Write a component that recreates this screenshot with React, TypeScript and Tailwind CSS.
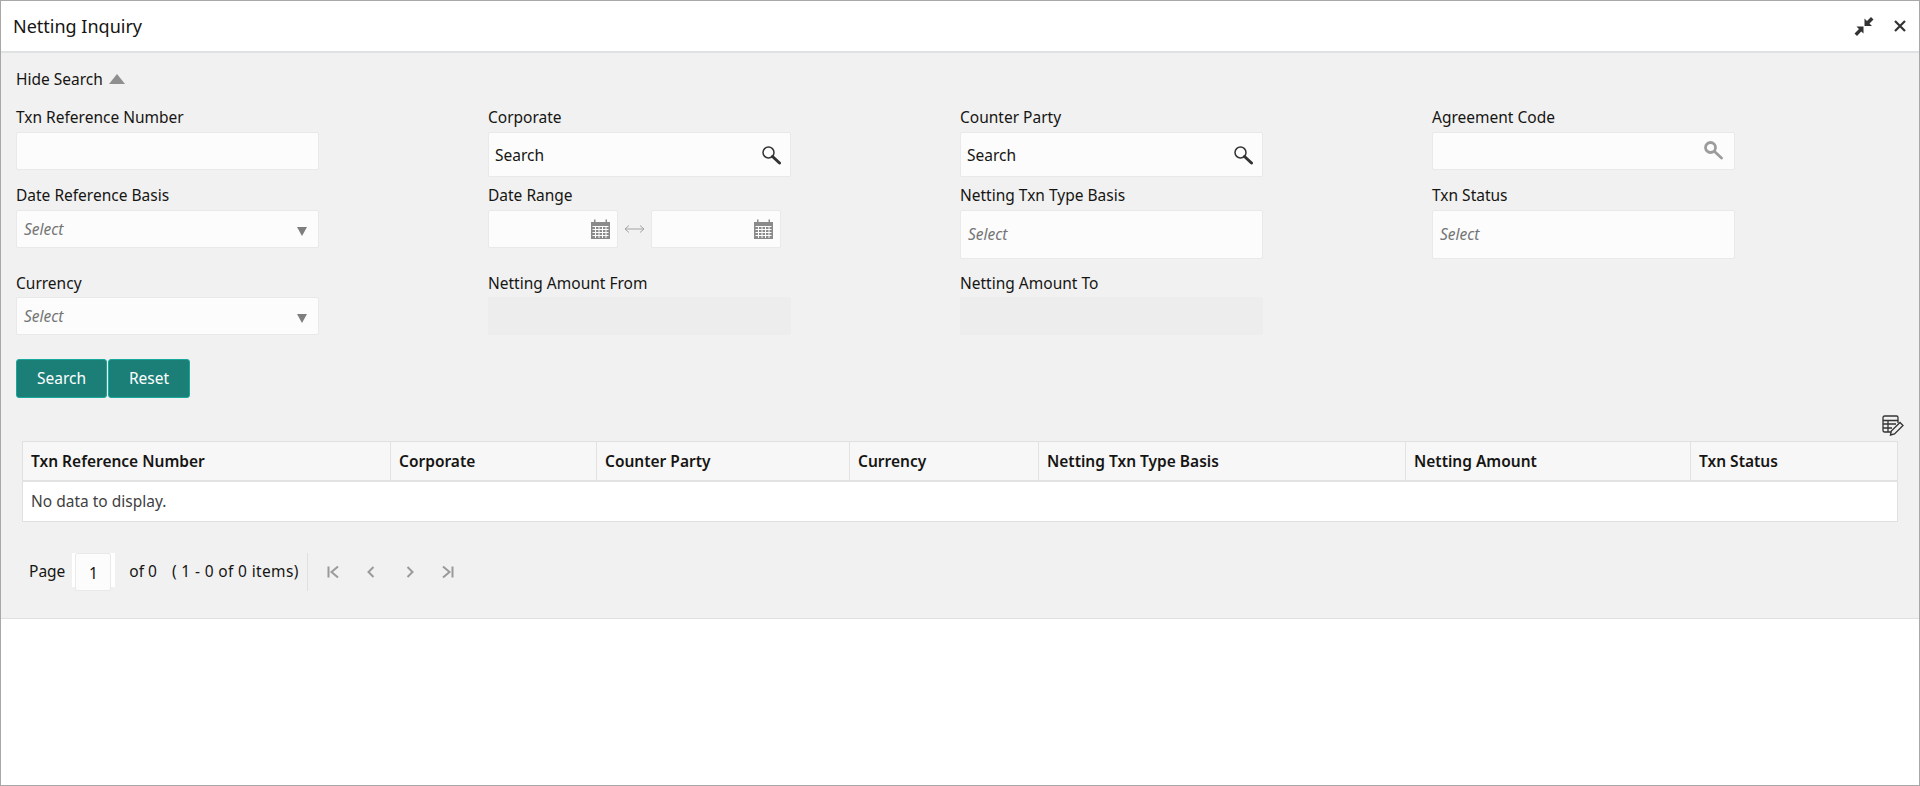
import type { ReactNode } from "react";

const FONT = "font-['Noto_Sans','Open_Sans',sans-serif]";

function SearchGlyph({ light }: { light?: boolean }) {
  const color = light ? "#9c9c9c" : "#333333";
  return (
    <svg width="20" height="20" viewBox="0 0 20 20" fill="none" aria-hidden="true">
      <circle cx="7.5" cy="7.5" r={light ? 5 : 5.5} stroke={color} strokeWidth={light ? 2.8 : 1.5} />
      <path d="M11.5 11.5L18.5 18" stroke={color} strokeWidth={light ? 2.8 : 3} strokeLinecap="round" />
    </svg>
  );
}

function CalendarGlyph() {
  return (
    <svg width="19" height="20" viewBox="0 0 19 20" aria-hidden="true">
      <path d="M0 3h3V0.5h1.5V3h10V0.5H16V3h3v17H0z" fill="#8a8a8a" />
      <path
        d="M1.5 7.5h16M1.5 10.5h16M1.5 13.5h16M1.5 16.5h16M4.5 7v12M8 7v12M11.5 7v12M15 7v12"
        stroke="#fcfcfc"
        strokeWidth="1"
      />
    </svg>
  );
}

function CollapseGlyph() {
  return (
    <svg width="20" height="20" viewBox="0 0 20 20" aria-hidden="true">
      <path d="M17 1L19.5 3.5L15.5 7.5L18 10H10.5V2.5L13 5z" fill="#333333" />
      <path d="M3 20L0.5 17.5L5 13L2.5 10.5H9.5V17.5L7.2 15.5z" fill="#333333" />
    </svg>
  );
}

function CloseGlyph() {
  return (
    <svg width="12" height="12" viewBox="0 0 12 12" aria-hidden="true">
      <path d="M1 1L11 11M11 1L1 11" stroke="#333333" strokeWidth="2.2" />
    </svg>
  );
}

function TableEditGlyph() {
  return (
    <svg width="22" height="21" viewBox="0 0 22 21" fill="none" aria-hidden="true">
      <path
        d="M10 17H2.5A1.5 1.5 0 0 1 1 15.5V2.5A1.5 1.5 0 0 1 2.5 1h12A1.5 1.5 0 0 1 16 2.5V8"
        stroke="#333333"
        strokeWidth="1.3"
      />
      <path d="M1 5.5h15M1 9h13M1 13h9M6 5.5V17" stroke="#333333" strokeWidth="1.3" />
      <path d="M8.5 20l.8-4L18 7.5l3 3L12.5 19z" fill="#f1f1f1" stroke="#333333" strokeWidth="1.3" />
    </svg>
  );
}

function PagerGlyph({ kind }: { kind: "first" | "prev" | "next" | "last" }) {
  const paths = {
    first: "M2.5 2.5V13.5M12 2.5L5.5 8L12 13.5",
    prev: "M9.5 3L4.5 8L9.5 13",
    next: "M5.5 3L10.5 8L5.5 13",
    last: "M12.5 2.5V13.5M3 2.5L9.5 8L3 13.5"
  };
  return (
    <svg width="15" height="16" viewBox="0 0 15 16" fill="none" aria-hidden="true">
      <path d={paths[kind]} stroke="#9a9a9a" strokeWidth="2" />
    </svg>
  );
}

function Field({
  label,
  labelH = "h-[27px]",
  children
}: {
  label: string;
  labelH?: string;
  children?: ReactNode;
}) {
  return (
    <div>
      <div className={`${labelH} text-[15.5px] leading-[24px] text-[#161513]`}>{label}</div>
      {children}
    </div>
  );
}

const box = "w-[303px] rounded-[2px] border border-[#e9e9e9] bg-[#fcfcfc]";

function SelectBox() {
  return (
    <div className={`${box} flex h-[38px] items-center justify-between pl-[7px] pr-[11px]`}>
      <span className="mt-[1px] text-[15.5px] italic text-[#757575]">Select</span>
      <span className="mt-[5px] h-0 w-0 border-x-[5.5px] border-t-[9px] border-x-transparent border-t-[#7e7e7e]" />
    </div>
  );
}

function MultiSelect() {
  return (
    <div className={`${box} flex h-[49px] items-center pl-[7px]`}>
      <span className="text-[15.5px] italic text-[#757575]">Select</span>
    </div>
  );
}

function LookupBox() {
  return (
    <div className={`${box} flex h-[45px] items-center justify-between pl-[6px] pr-[9px]`}>
      <span className="mt-[3px] text-[15.5px] text-[#161513]">Search</span>
      <SearchGlyph />
    </div>
  );
}

function DateBox() {
  return (
    <div className="flex h-[38px] w-[130px] items-center justify-end rounded-[2px] border border-[#e9e9e9] bg-[#fcfcfc] pr-[7px]">
      <CalendarGlyph />
    </div>
  );
}

const columns = [
  { title: "Txn Reference Number", width: "w-[368px]" },
  { title: "Corporate", width: "w-[206px]" },
  { title: "Counter Party", width: "w-[253px]" },
  { title: "Currency", width: "w-[189px]" },
  { title: "Netting Txn Type Basis", width: "w-[367px]" },
  { title: "Netting Amount", width: "w-[285px]" },
  { title: "Txn Status", width: "flex-1" }
];

// Netting Inquiry search window with an empty results table.
export default function App() {
  return (
    <div className={`${FONT} flex h-[786px] w-full flex-col overflow-hidden border border-[#a8a8a8] bg-white`}>
      <header className="flex h-[52px] shrink-0 items-center justify-between border-b-2 border-[#dfe2e2] pl-[12px] pr-[13px]">
        <h1 className="text-[18px] font-normal text-[#161513]">Netting Inquiry</h1>
        <div className="flex items-center gap-[20px]">
          <CollapseGlyph />
          <CloseGlyph />
        </div>
      </header>

      <main className="h-[566px] shrink-0 border-b border-[#e0e0e0] bg-[#f1f1f1]">
        <div className="flex h-[52px] items-start gap-[6px] pl-[15px] pt-[14px] text-[15.5px] leading-[24px] text-[#161513]">
          <span>Hide Search</span>
          <span className="mt-[7px] h-0 w-0 border-x-[8px] border-b-[10px] border-x-transparent border-b-[#8f8f8f]" />
        </div>

        <div className="grid grid-cols-[472px_472px_472px_1fr] grid-rows-[78px_88px_88px] pl-[15px]">
          <Field label="Txn Reference Number">
            <div className={`${box} h-[38px]`} />
          </Field>
          <Field label="Corporate">
            <LookupBox />
          </Field>
          <Field label="Counter Party">
            <LookupBox />
          </Field>
          <Field label="Agreement Code">
            <div className={`${box} flex h-[38px] items-start justify-end pr-[11px] pt-[7px]`}>
              <SearchGlyph light />
            </div>
          </Field>

          <Field label="Date Reference Basis">
            <SelectBox />
          </Field>
          <Field label="Date Range">
            <div className="flex items-center">
              <DateBox />
              <svg className="mx-[6px]" width="21" height="10" viewBox="0 0 21 10" fill="none" aria-hidden="true">
                <path d="M1 5h19M5 1.5L1 5l4 3.5M16 1.5L20 5l-4 3.5" stroke="#a3a3a3" strokeWidth="1" />
              </svg>
              <DateBox />
            </div>
          </Field>
          <Field label="Netting Txn Type Basis">
            <MultiSelect />
          </Field>
          <Field label="Txn Status">
            <MultiSelect />
          </Field>

          <Field label="Currency" labelH="h-[26px]">
            <SelectBox />
          </Field>
          <Field label="Netting Amount From" labelH="h-[26px]">
            <div className="h-[38px] w-[303px] rounded-[2px] bg-[#ededed]" />
          </Field>
          <Field label="Netting Amount To" labelH="h-[26px]">
            <div className="h-[38px] w-[303px] rounded-[2px] bg-[#ededed]" />
          </Field>
        </div>

        <div className="flex gap-[1px] pl-[15px]">
          <button className="h-[39px] w-[91px] rounded-[3px] border border-[#19a89c] bg-[#1b7f78] pt-[1px] text-[15.5px] text-white">
            Search
          </button>
          <button className="h-[39px] w-[82px] rounded-[3px] border border-[#19a89c] bg-[#1b7f78] pt-[1px] text-[15.5px] text-white">
            Reset
          </button>
        </div>

        <div className="mt-[16px] flex h-[27px] items-start justify-end pr-[15px] pt-[1px]">
          <TableEditGlyph />
        </div>

        <div className="ml-[21px] mr-[21px] border border-[#e0e0e0] bg-white">
          <div className="flex h-[40px] border-b-2 border-[#e2e2e2] bg-[#f7f7f7]">
            {columns.map((col, i) => (
              <div
                key={col.title}
                className={`${col.width} flex items-center pl-[8px] pt-[2px] text-[15.5px] font-semibold text-[#161513] ${
                  i < columns.length - 1 ? "border-r border-[#e2e2e2]" : ""
                }`}
              >
                {col.title}
              </div>
            ))}
          </div>
          <div className="flex h-[39px] items-center pl-[8px] pt-[1px] text-[15.5px] text-[#3f3f3f]">
            No data to display.
          </div>
        </div>

        <div className="mt-[31px] flex h-[38px] items-center pl-[28px] text-[15.5px] text-[#161513]">
          <span>Page</span>
          <div className="relative ml-[10px] mr-[18px] h-[38px] w-[36px]">
            <div className="absolute -left-[3px] -right-[4px] top-0 h-[34px] bg-white" />
            <div className="absolute inset-0 flex items-center justify-center rounded-[2px] border border-[#e9e9e9] bg-[#fcfcfc] pt-[4px]">
              1
            </div>
          </div>
          <span>of 0</span>
          <span className="ml-[15px] tracking-[0.35px]">( 1 - 0 of 0 items)</span>
          <div className="ml-[8px] mr-[18px] h-[38px] w-px bg-[#e0e0e0]" />
          <div className="flex items-center gap-[23px]">
            <PagerGlyph kind="first" />
            <PagerGlyph kind="prev" />
            <PagerGlyph kind="next" />
            <PagerGlyph kind="last" />
          </div>
        </div>
      </main>
    </div>
  );
}
